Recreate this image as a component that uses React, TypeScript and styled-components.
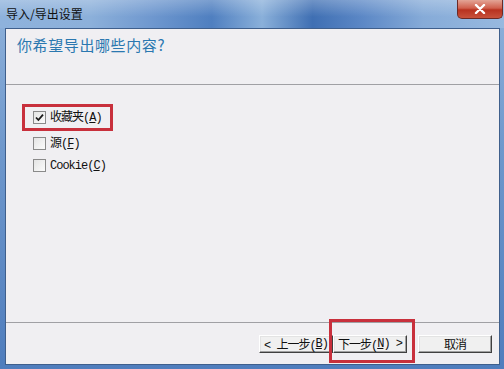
import styled, {createGlobalStyle} from "styled-components";

const GlobalStyle = createGlobalStyle`
 html, body {
  margin: 0;
  padding: 0;
  background: #ffffff;
 }
 body {
  font-family: "Noto Sans CJK SC", "Liberation Sans", sans-serif;
 }
`;

const items = [
 {label: "收藏夹", key: "A", checked: true, marked: true},
 {label: "源", key: "F", checked: false, marked: false},
 {label: "Cookie", key: "C", checked: false, marked: false},
];

const Check = ({checked}: {checked: boolean}) => (
 <Box>
  {checked && (
   <svg width="9" height="9" viewBox="0 0 9 9">
    <path d="M1 4.5 L3.4 7 L8 1.6" stroke="#1a1a1a" strokeWidth="1.8" fill="none" />
   </svg>
  )}
 </Box>
);

const App = () => {
 return (
  <>
   <GlobalStyle />
   <Window>
    <TitleBar>
     <Title>导入/导出设置</Title>
     <CloseButton>
      <svg width="12" height="10" viewBox="0 0 12 10">
       <path d="M2 1 L10 9 M10 1 L2 9" stroke="#fff" strokeWidth="2.4" strokeLinecap="round" />
      </svg>
     </CloseButton>
    </TitleBar>
    <Client>
     <Header>
      <Heading>你希望导出哪些内容?</Heading>
     </Header>
     <Body>
      {items.map(item => (
       <Row key={item.key} marked={item.marked}>
        <Check checked={item.checked} />
        <Label>
         {item.label}(<u>{item.key}</u>)
        </Label>
       </Row>
      ))}
     </Body>
     <Footer>
      <Button>&lt; 上一步(<u>B</u>)</Button>
      <NextWrap>
       <Button>下一步(<u>N</u>) &gt;</Button>
       <Ring />
      </NextWrap>
      <Button spaced>取消</Button>
     </Footer>
    </Client>
   </Window>
  </>
 );
};

export default App;

const Window = styled.div`
 width: 504px;
 height: 369px;
 display: flex;
 flex-direction: column;
 background: linear-gradient(180deg, #8fb2db 0%, #6f98cc 40%, #4f7dbd 100%);
 overflow: hidden;
`;

const TitleBar = styled.div`
 height: 28px;
 flex-shrink: 0;
 display: flex;
 align-items: flex-start;
 justify-content: space-between;
 background:
  linear-gradient(180deg, rgba(255, 255, 255, 0.25) 0%, rgba(255, 255, 255, 0) 60%),
  linear-gradient(90deg, #8eb2dc 0%, #8cb0da 18%, #6f98cf 30%, #4f7fc0 42%, #8ab0da 52%, #3f6fb3 62%, #5c88c6 72%, #86abd8 84%, #97b9df 100%);
`;

const Title = styled.span`
 font-size: 12px;
 line-height: 12px;
 color: #101010;
 margin: 8px 0 0 6px;
`;

const CloseButton = styled.div`
 width: 46px;
 height: 19px;
 margin-right: 1px;
 display: flex;
 align-items: center;
 justify-content: center;
 border: 1px solid #6b2a26;
 border-top: none;
 border-radius: 0 0 5px 5px;
 background: linear-gradient(180deg, #e3a596 0%, #d0604d 45%, #b8321f 55%, #c8523c 100%);
 box-sizing: border-box;
`;

const Client = styled.div`
 flex: 1;
 display: flex;
 flex-direction: column;
 margin: 0 4px 4px 5px;
 background: #f0eff2;
 border: 1px solid #3f5f8c;
`;

const Header = styled.div`
 height: 56px;
 border-bottom: 1px solid #a0a0a4;
 padding: 7px 0 0 11px;
 box-sizing: border-box;
`;

const Heading = styled.h1`
 margin: 0;
 font-size: 15px;
 font-weight: 400;
 letter-spacing: 0.6px;
 line-height: 18px;
 color: #2a78b0;
`;

const Body = styled.div`
 flex: 1;
 display: flex;
 flex-direction: column;
 align-items: flex-start;
 gap: 3px;
 padding: 19px 0 0 16px;
 border-bottom: 1px solid #a0a0a4;
`;

const Row = styled.div<{marked: boolean}>`
 display: inline-flex;
 align-items: center;
 gap: 4px;
 height: 19px;
 padding: ${({marked}) => (marked ? "1px 8px" : "0 11px")};
 border: ${({marked}) => (marked ? "3px solid #c8303c" : "none")};
`;

const Box = styled.span`
 width: 11px;
 height: 11px;
 display: flex;
 align-items: center;
 justify-content: center;
 border: 1px solid #8a8a8a;
 background: linear-gradient(135deg, #e4e4e4 0%, #fbfbfb 100%);
`;

const Label = styled.span`
 font-family: "Liberation Mono", "Noto Sans CJK SC", monospace;
 font-size: 12px;
 letter-spacing: -1px;
 color: #101010;
 line-height: 14px;

 u {
  text-decoration-thickness: 1px;
 }
`;

const Footer = styled.div`
 height: 41px;
 display: flex;
 align-items: flex-start;
 justify-content: flex-end;
 padding: 12px 7px 0 0;
 box-sizing: border-box;
`;

const NextWrap = styled.div`
 position: relative;
 display: flex;
`;

const Ring = styled.div`
 position: absolute;
 top: -16px;
 bottom: -10px;
 left: -4px;
 right: -8px;
 border: 3px solid #c8303c;
 pointer-events: none;
`;

const Button = styled.button<{spaced?: boolean}>`
 width: 74px;
 height: 18px;
 padding: 0;
 margin-left: ${({spaced}) => (spaced ? "11px" : "0")};
 font-family: "Liberation Mono", "Noto Sans CJK SC", monospace;
 font-size: 12px;
 letter-spacing: -1px;
 color: #101010;
 background: #f0f0f0;
 border: 1px solid;
 border-color: #ffffff #404040 #404040 #ffffff;
 box-shadow: inset -1px -1px 0 #a0a0a0, inset 1px 1px 0 #e3e3e3;
 display: flex;
 align-items: center;
 justify-content: center;
`;
